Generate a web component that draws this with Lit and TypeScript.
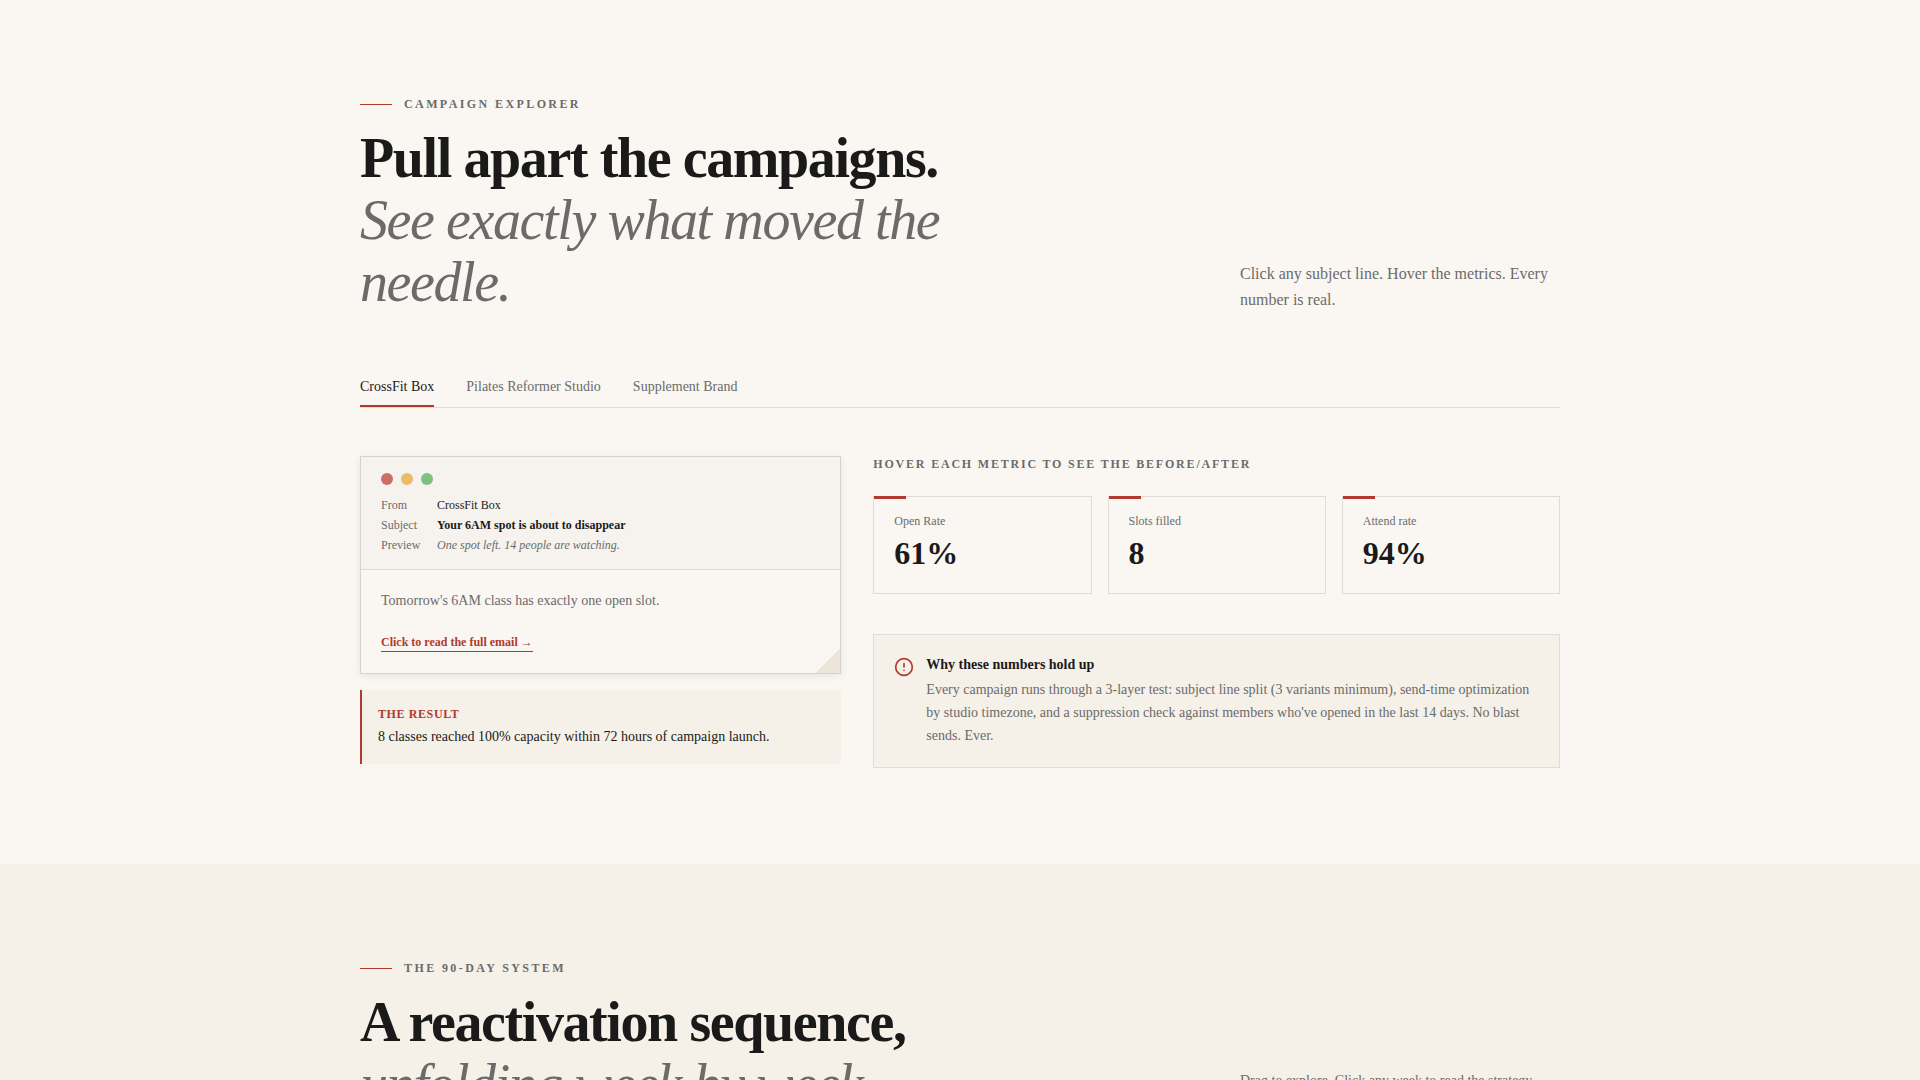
import { LitElement, html, css } from "lit";
import { customElement, property, state } from "lit/decorators.js";
import { classMap } from "lit/directives/class-map.js";

interface Metric {
  label: string;
  value: string;
}

const TABS = ["CrossFit Box", "Pilates Reformer Studio", "Supplement Brand"];

const METRICS: Metric[] = [
  { label: "Open Rate", value: "61%" },
  { label: "Slots filled", value: "8" },
  { label: "Attend rate", value: "94%" },
];

/* Eyebrow, two-tone title and a short side note. */
@customElement("section-header")
export class SectionHeader extends LitElement {
  @property() eyebrow = "";
  @property() lead = "";
  @property() follow = "";
  @property() note = "";
  @property({ type: Boolean }) compact = false;

  static styles = css`
    :host {
      display: block;
    }
    .header {
      display: flex;
      justify-content: space-between;
      align-items: flex-end;
      gap: 32px;
    }
    .titles {
      flex: 0 1 672px;
    }
    .eyebrow {
      display: flex;
      align-items: center;
      gap: 12px;
      margin: 0 0 15px;
      font-size: 12px;
      line-height: 16px;
      font-weight: 700;
      letter-spacing: 0.2em;
      text-transform: uppercase;
      color: var(--muted);
    }
    .rule {
      width: 32px;
      height: 1px;
      background: var(--accent);
    }
    .title {
      margin: 0;
      font-size: 56px;
      line-height: 62px;
      font-weight: 700;
      letter-spacing: -0.025em;
      color: var(--ink);
    }
    .follow {
      display: block;
      font-weight: 400;
      font-style: italic;
      color: var(--muted);
    }
    .note {
      flex: 0 1 320px;
      margin: 0;
      font-size: 16px;
      line-height: 26px;
      color: var(--muted);
    }
    .note.compact {
      min-height: 46px;
      font-size: 14px;
      line-height: 23px;
    }
  `;

  render() {
    return html`
      <header class="header">
        <div class="titles">
          <p class="eyebrow"><span class="rule"></span>${this.eyebrow}</p>
          <h2 class="title">${this.lead}<span class="follow">${this.follow}</span></h2>
        </div>
        <p class=${classMap({ note: true, compact: this.compact })}>${this.note}</p>
      </header>
    `;
  }
}

/* Email preview with window dots, envelope fields and a folded corner. */
@customElement("email-card")
export class EmailCard extends LitElement {
  static styles = css`
    :host {
      display: block;
    }
    .card {
      position: relative;
      border: 1px solid var(--line-strong);
      background: var(--paper);
      box-shadow: 0 2px 8px rgba(26, 26, 26, 0.08);
    }
    .head {
      padding: 16px 20px;
      border-bottom: 1px solid var(--line);
      background: #f6f3ee;
    }
    .dots {
      display: flex;
      gap: 8px;
      margin-bottom: 12px;
    }
    .dot {
      width: 12px;
      height: 12px;
      border-radius: 50%;
    }
    .red {
      background: #cd6e66;
    }
    .amber {
      background: #eabb69;
    }
    .green {
      background: #7cc17e;
    }
    .fields {
      display: grid;
      grid-template-columns: 48px 1fr;
      gap: 4px 8px;
      margin: 0;
      font-size: 12px;
      line-height: 16px;
    }
    dt {
      color: var(--muted);
    }
    dd {
      margin: 0;
      color: var(--ink);
    }
    .subject {
      font-weight: 700;
    }
    .preview {
      font-style: italic;
      color: var(--muted);
    }
    .body {
      display: flex;
      flex-direction: column;
      align-items: flex-start;
      gap: 22px;
      padding: 20px 20px 21px;
    }
    .text {
      margin: 0;
      font-size: 14px;
      line-height: 22px;
      color: var(--muted);
    }
    .more {
      padding: 0 0 1px;
      border: 0;
      border-bottom: 1px solid var(--accent);
      background: none;
      font: inherit;
      font-size: 12px;
      line-height: 16px;
      font-weight: 700;
      color: var(--accent);
      cursor: pointer;
    }
    .fold {
      position: absolute;
      right: 0;
      bottom: 0;
      width: 24px;
      height: 24px;
      background: linear-gradient(135deg, transparent 50%, #ebe6d8 50%);
    }
  `;

  render() {
    return html`
      <article class="card">
        <div class="head">
          <div class="dots">
            <span class="dot red"></span>
            <span class="dot amber"></span>
            <span class="dot green"></span>
          </div>
          <dl class="fields">
            <dt>From</dt>
            <dd>CrossFit Box</dd>
            <dt>Subject</dt>
            <dd class="subject">Your 6AM spot is about to disappear</dd>
            <dt>Preview</dt>
            <dd class="preview">One spot left. 14 people are watching.</dd>
          </dl>
        </div>
        <div class="body">
          <p class="text">Tomorrow's 6AM class has exactly one open slot.</p>
          <button class="more" type="button">Click to read the full email →</button>
        </div>
        <span class="fold"></span>
      </article>
    `;
  }
}

@customElement("metric-card")
export class MetricCard extends LitElement {
  @property() label = "";
  @property() value = "";

  static styles = css`
    :host {
      display: block;
    }
    .card {
      position: relative;
      padding: 16px 20px 20px;
      border: 1px solid var(--line);
    }
    .mark {
      position: absolute;
      top: -1px;
      left: 0;
      width: 32px;
      height: 3px;
      background: var(--accent);
    }
    .label {
      margin: 0 0 4px;
      font-size: 12px;
      line-height: 16px;
      color: var(--muted);
    }
    .value {
      margin: 0;
      font-size: 32px;
      line-height: 40px;
      font-weight: 700;
      color: var(--ink);
    }
  `;

  render() {
    return html`
      <div class="card">
        <span class="mark"></span>
        <p class="label">${this.label}</p>
        <p class="value">${this.value}</p>
      </div>
    `;
  }
}

@customElement("app-root")
export class AppRoot extends LitElement {
  @state() private active = 0;

  static styles = css`
    :host {
      --paper: #faf7f2;
      --sand: #f5f0e8;
      --ink: #1a1a1a;
      --muted: #6b6b6b;
      --accent: #b03a2e;
      --line: #dfdcd7;
      --line-strong: #d5d2cd;
      display: block;
      font-family: "Liberation Serif", "Times New Roman", serif;
      color: var(--ink);
      background: var(--paper);
    }
    .section {
      padding: 96px 32px;
    }
    .alt {
      background: var(--sand);
    }
    .inner {
      max-width: 1200px;
      margin: 0 auto;
    }
    .tabs {
      display: flex;
      gap: 32px;
      margin: 48px 0;
      border-bottom: 1px solid var(--line);
    }
    .tab {
      padding: 15px 0 7px;
      border: 0;
      border-bottom: 2px solid transparent;
      background: none;
      font: inherit;
      font-size: 14px;
      line-height: 22px;
      color: var(--muted);
      cursor: pointer;
    }
    .tab.active {
      border-bottom-color: var(--accent);
      color: var(--ink);
    }
    .grid {
      display: grid;
      grid-template-columns: repeat(12, minmax(0, 1fr));
      gap: 32px;
    }
    .left {
      grid-column: span 5;
    }
    .right {
      grid-column: span 7;
    }
    .result {
      margin-top: 16px;
      padding: 16px;
      border-left: 2px solid var(--accent);
      background: var(--sand);
    }
    .result-label {
      margin: 0 0 4px;
      font-size: 12px;
      line-height: 16px;
      font-weight: 700;
      letter-spacing: 0.05em;
      text-transform: uppercase;
      color: var(--accent);
    }
    .result-text {
      margin: 0;
      font-size: 14px;
      line-height: 22px;
    }
    .hint {
      margin: 0 0 24px;
      font-size: 12px;
      line-height: 16px;
      font-weight: 700;
      letter-spacing: 0.15em;
      text-transform: uppercase;
      color: var(--muted);
    }
    .metrics {
      display: grid;
      grid-template-columns: repeat(3, minmax(0, 1fr));
      gap: 16px;
    }
    .why {
      display: flex;
      align-items: flex-start;
      gap: 12px;
      margin-top: 40px;
      padding: 20px;
      border: 1px solid var(--line);
      background: var(--sand);
    }
    .icon {
      flex: none;
      width: 20px;
      height: 20px;
      margin-top: 2px;
      color: var(--accent);
    }
    .why-title {
      margin: 0 0 3px;
      font-size: 14px;
      line-height: 20px;
      font-weight: 700;
    }
    .why-text {
      margin: 0;
      font-size: 14px;
      line-height: 23px;
      color: var(--muted);
    }
  `;

  render() {
    return html`
      <main>
        <section class="section">
          <div class="inner">
            <section-header
              eyebrow="Campaign Explorer"
              lead="Pull apart the campaigns."
              follow="See exactly what moved the needle."
              note="Click any subject line. Hover the metrics. Every number is real."
            ></section-header>
            <div class="tabs" role="tablist">
              ${TABS.map(
                (name, i) => html`
                  <button
                    class=${classMap({ tab: true, active: i === this.active })}
                    type="button"
                    role="tab"
                    aria-selected=${i === this.active ? "true" : "false"}
                    @click=${() => (this.active = i)}
                  >${name}</button>
                `
              )}
            </div>
            <div class="grid">
              <div class="left">
                <email-card></email-card>
                <div class="result">
                  <p class="result-label">The result</p>
                  <p class="result-text">8 classes reached 100% capacity within 72 hours of campaign launch.</p>
                </div>
              </div>
              <div class="right">
                <p class="hint">Hover each metric to see the before/after</p>
                <div class="metrics">
                  ${METRICS.map((m) => html`<metric-card .label=${m.label} .value=${m.value}></metric-card>`)}
                </div>
                <div class="why">
                  <svg class="icon" viewBox="0 0 24 24" fill="none" stroke="currentColor" stroke-width="2" stroke-linecap="round" stroke-linejoin="round" aria-hidden="true">
                    <circle cx="12" cy="12" r="10"></circle>
                    <path d="M12 8v4M12 16h.01"></path>
                  </svg>
                  <div>
                    <h3 class="why-title">Why these numbers hold up</h3>
                    <p class="why-text">Every campaign runs through a 3-layer test: subject line split (3 variants minimum), send-time optimization by studio timezone, and a suppression check against members who've opened in the last 14 days. No blast sends. Ever.</p>
                  </div>
                </div>
              </div>
            </div>
          </div>
        </section>
        <section class="section alt">
          <div class="inner">
            <section-header
              eyebrow="The 90-Day System"
              lead="A reactivation sequence,"
              follow="unfolding week by week."
              note="Drag to explore. Click any week to read the strategy."
              compact
            ></section-header>
          </div>
        </section>
      </main>
    `;
  }
}
